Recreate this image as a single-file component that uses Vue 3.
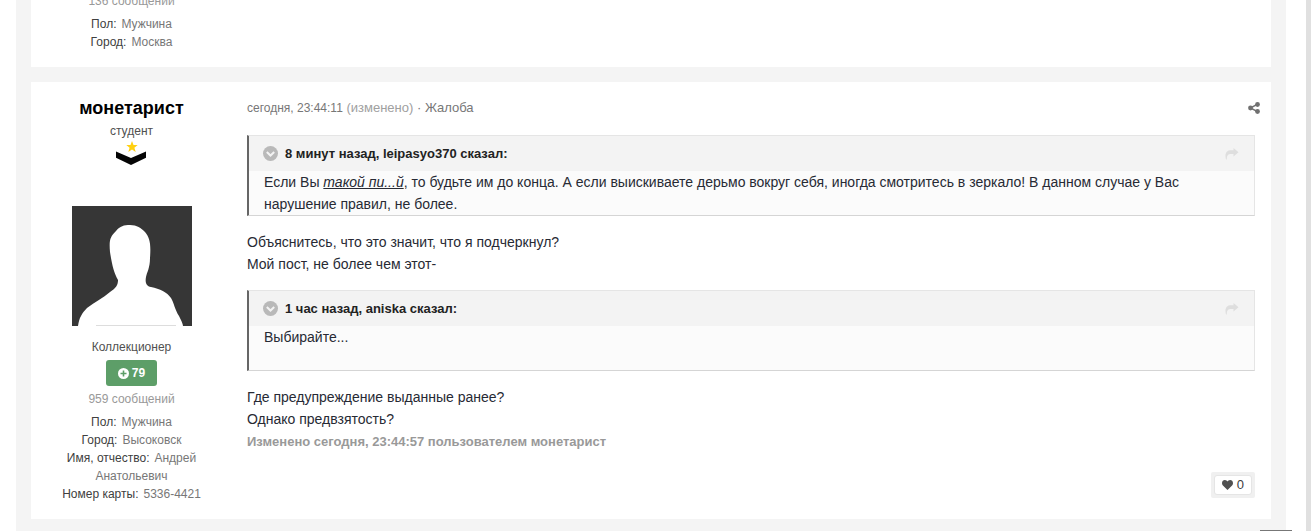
<script setup>
const previousFields = [
  { label: 'Пол:', value: 'Мужчина' },
  { label: 'Город:', value: 'Москва' },
]
const fields = [
  { label: 'Пол:', value: 'Мужчина' },
  { label: 'Город:', value: 'Высоковск' },
  { label: 'Имя, отчество:', value: 'Андрей Анатольевич' },
  { label: 'Номер карты:', value: '5336-4421' },
]
</script>

<template>
  <div class="page">
    <main class="thread">
      <article class="post">
        <aside class="author">
          <div class="count">136 сообщений</div>
          <ul class="fields">
            <li v-for="f in previousFields" :key="f.label"><span class="label">{{ f.label }}</span>{{ f.value }}</li>
          </ul>
        </aside>
      </article>

      <article class="post current">
        <aside class="author">
          <h3 class="name"><a href="#">монетарист</a></h3>
          <div class="rank">студент</div>
          <svg class="insignia" width="32" height="24" viewBox="0 0 32 24" aria-hidden="true">
            <path fill="#ffd011" d="M16 0l1.500 4h4.200l-3.300 2.700 1.300 4.300-3.700-2.500-3.700 2.500 1.300-4.300-3.300-2.700h4.200z" />
            <path fill="#050505" d="M0 10.500l15 6.500 15-6.500v6.300L15 24 0 16.800z" />
          </svg>
          <a href="#" class="avatar" aria-label="монетарист">
            <svg width="120" height="120" viewBox="0 0 120 120" aria-hidden="true">
              <path fill="#363636" d="M0 0h120v120H0z" />
              <path fill="#fff" d="M6 120C7 112 10 107 15 102C23 96 31 92 38 86C44 82 46 79 46 74C42 67 40 59 38 46C37 34 38 31 44 25C48 20 52 19 58 19C65 19 69 22 73 26C78 32 79 38 78 52C78 62 75 66 74 71C73 76 74 80 79 81C88 83 95 86 99 92C102 97 103 104 107 110C109 114 111 118 111 120Z" />
              <path fill="#ddd" d="M24 119h80v1H24z" />
            </svg>
          </a>
          <div class="group">Коллекционер</div>
          <div class="reputation">
            <svg width="11" height="11" viewBox="0 0 11 11" aria-hidden="true">
              <circle cx="5.500" cy="5.500" r="5.500" fill="#fff" />
              <path d="M5.500 2.500v6M2.500 5.500h6" stroke="#5d9e68" stroke-width="1.600" />
            </svg>
            79
          </div>
          <div class="count">959 сообщений</div>
          <ul class="fields">
            <li v-for="f in fields" :key="f.label"><span class="label">{{ f.label }}</span>{{ f.value }}</li>
          </ul>
        </aside>

        <div class="content">
          <header class="meta">
            <div>
              <a href="#" class="date">сегодня, 23:44:11</a> <span class="edited">(изменено)</span> · <a href="#">Жалоба</a>
            </div>
            <a href="#" class="share" aria-label="Поделиться">
              <svg width="12" height="12" viewBox="0 0 12 12" aria-hidden="true">
                <path d="M9.500 2.200L2.500 6l7 3.700" fill="none" stroke="#707070" stroke-width="1.500" />
                <g fill="#707070"><circle cx="2.500" cy="6" r="2.400" /><circle cx="9.500" cy="2.500" r="2.400" /><circle cx="9.500" cy="9.500" r="2.400" /></g>
              </svg>
            </a>
          </header>

          <blockquote class="quote">
            <div class="cite">
              <button type="button" class="toggle" aria-label="Свернуть цитату">
                <svg width="15" height="15" viewBox="0 0 15 15" aria-hidden="true">
                  <circle cx="7.500" cy="7.500" r="7.500" fill="#b9b9b9" />
                  <path d="M3.800 6l3.700 3.500L11.200 6" fill="none" stroke="#f3f3f3" stroke-width="2" />
                </svg>
              </button>
              <span>8 минут назад, leipasyo370 сказал:</span>
              <a href="#" class="jump" aria-label="К сообщению">
                <svg width="14" height="12" viewBox="0 0 14 12" aria-hidden="true">
                  <path fill="#dedede" d="M8.500 0L13.500 4.300 8.500 8.500V6H6C3.200 6 1.800 7.200 1.800 11.500H1C-.6 5.500 1.400 2.300 6 2.300h2.500z" />
                </svg>
              </a>
            </div>
            <p>Если Вы <em>такой пи...й</em>, то будьте им до конца. А если выискиваете дерьмо вокруг себя, иногда смотритесь в зеркало! В данном случае у Вас нарушение правил, не более.</p>
          </blockquote>

          <p class="text">Объяснитесь, что это значит, что я подчеркнул?<br>Мой пост, не более чем этот-</p>

          <blockquote class="quote">
            <div class="cite">
              <button type="button" class="toggle" aria-label="Свернуть цитату">
                <svg width="15" height="15" viewBox="0 0 15 15" aria-hidden="true">
                  <circle cx="7.500" cy="7.500" r="7.500" fill="#b9b9b9" />
                  <path d="M3.800 6l3.700 3.500L11.200 6" fill="none" stroke="#f3f3f3" stroke-width="2" />
                </svg>
              </button>
              <span>1 час назад, aniska сказал:</span>
              <a href="#" class="jump" aria-label="К сообщению">
                <svg width="14" height="12" viewBox="0 0 14 12" aria-hidden="true">
                  <path fill="#dedede" d="M8.500 0L13.500 4.300 8.500 8.500V6H6C3.200 6 1.800 7.200 1.800 11.500H1C-.6 5.500 1.400 2.300 6 2.300h2.500z" />
                </svg>
              </a>
            </div>
            <p>Выбирайте...<br>&nbsp;</p>
          </blockquote>

          <p class="text">Где предупреждение выданные ранее?<br>Однако предвзятость?</p>
          <div class="edit-note">Изменено сегодня, 23:44:57 пользователем монетарист</div>

          <footer class="likes">
            <div class="like-frame">
              <button type="button" class="like">
                <svg width="11" height="10" viewBox="0 0 11 10" aria-hidden="true">
                  <path fill="#505050" d="M5.500 10L.9 5.500C-1 3.200.3 0 2.900 0c1.300 0 2.100.8 2.600 1.600C6 .8 6.800 0 8.100 0c2.600 0 3.900 3.200 2 5.500z" />
                </svg>
                0
              </button>
            </div>
          </footer>
        </div>
      </article>
    </main>
    <div class="rail"></div>
    <div class="corner"></div>
  </div>
</template>

<style>
body {
  background: #fff;
}
</style>

<style scoped>
.page {
  position: relative;
  display: flex;
  height: 100vh;
  overflow: hidden;
  font: 12px/18px "Liberation Sans", Arial, sans-serif;
  color: #777;
}
.thread {
  flex: 1;
  display: flex;
  flex-direction: column;
  align-self: flex-start;
  gap: 15px;
  margin: -8px 20px 0 16px;
  padding: 0 15px 20px;
  background: #f4f4f4;
}
.rail {
  width: 5px;
  background: #e0e0e0;
}
.corner {
  position: absolute;
  right: 19px;
  bottom: 0;
  width: 32px;
  height: 1px;
  background: #777;
}
.post {
  display: flex;
  background: #fff;
}
.current {
  padding-top: 15px;
}
a {
  color: inherit;
  text-decoration: none;
}
svg {
  display: block;
}
.author {
  box-sizing: border-box;
  flex: none;
  display: flex;
  flex-direction: column;
  align-items: center;
  width: 201px;
  padding: 0 20px 16px;
  text-align: center;
}
.name {
  margin: 0 0 3px;
  font-size: 18px;
  line-height: 22px;
  color: #000;
}
.rank,
.group {
  color: #505050;
}
.insignia {
  margin-top: 1px;
}
.avatar {
  margin: 41px 0 12px;
}
.reputation {
  display: flex;
  align-items: center;
  gap: 3px;
  margin: 4px 0;
  padding: 4px 12px;
  border-radius: 3px;
  background: #5d9e68;
  color: #fff;
  font-weight: bold;
}
.count {
  color: #999;
}
.fields {
  margin: 5px 0 0;
  padding: 0;
  list-style: none;
}
.label {
  margin-right: 5px;
  color: #404040;
}
.content {
  flex: 1;
  min-width: 0;
  padding: 0 16px 21px 15px;
}
.meta {
  display: flex;
  justify-content: space-between;
  align-items: center;
  margin-bottom: 16px;
  font-size: 13px;
  line-height: 22px;
}
.date {
  font-size: 12px;
}
.edited {
  color: #a0a0a0;
}
.share {
  margin-right: -5px;
}
.quote {
  margin: 0;
  border: 1px solid #e5e5e5;
  border-bottom-color: #d5d5d5;
  border-left: 2px solid #666;
  background: #fbfbfb;
  color: #272a34;
}
.quote p {
  margin: 0;
  padding: 0 15px;
  font-size: 14px;
  line-height: 22px;
}
.cite {
  display: flex;
  align-items: center;
  gap: 7px;
  height: 35px;
  padding: 0 15px 0 14px;
  background: #f3f3f3;
  color: #222;
  font-size: 13px;
  line-height: 16px;
  font-weight: bold;
}
.toggle {
  padding: 0;
  border: 0;
  background: none;
}
.jump {
  margin-left: auto;
}
em {
  text-decoration: underline;
}
.text {
  margin: 15px 0;
  color: #272a34;
  font-size: 14px;
  line-height: 22px;
}
.edit-note {
  margin-top: -15px;
  color: #999;
  font-size: 13px;
  font-weight: bold;
  line-height: 24px;
}
.likes {
  display: flex;
  justify-content: flex-end;
  margin-top: 18px;
}
.like-frame {
  padding: 3px;
  border-radius: 2px;
  background: #f0f0f0;
}
.like {
  display: flex;
  align-items: center;
  gap: 4px;
  padding: 0 7px;
  border: 1px solid #e5e5e5;
  border-radius: 3px;
  background: #fff;
  color: #404040;
  font: 13px/18px "Liberation Sans", Arial, sans-serif;
}
</style>
